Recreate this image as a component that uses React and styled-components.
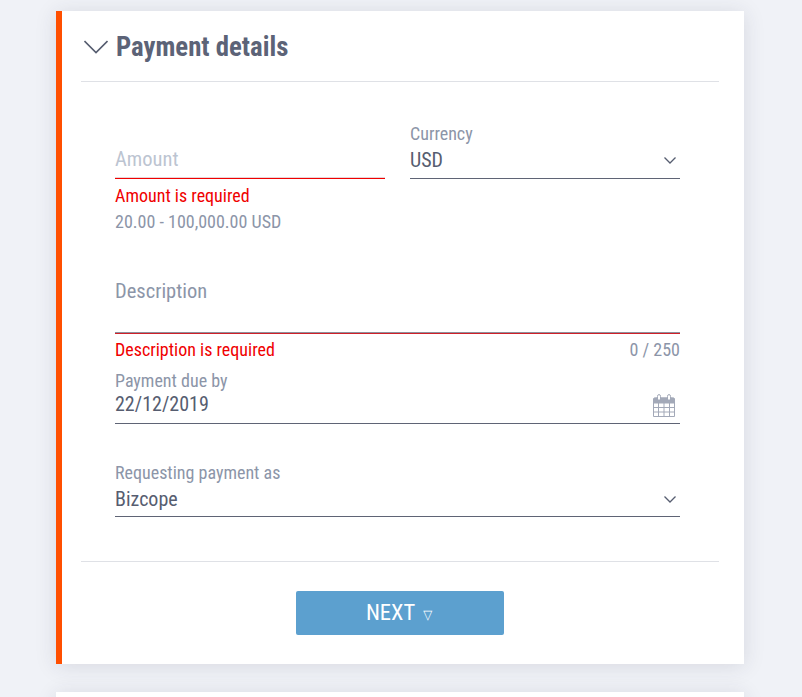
import React from "react";
import styled, { createGlobalStyle } from "styled-components";

const GlobalStyle = createGlobalStyle`
    * {
        box-sizing: border-box;
    }
    html, body {
        margin: 0;
        height: 697px;
        overflow: hidden;
        background-color: #f0f2f7;
        font-family: "Roboto", "Liberation Sans", sans-serif;
        font-stretch: 75%;
    }
`

const Page = styled.div`
    padding-top: 11px;
    display: flex;
    flex-direction: column;
    gap: 28px;
`

const Card = styled.section`
    width: 688px;
    margin-left: 56px;
    background-color: #fff;
    border-left: ${(p) => (p.$active ? "6px solid #ff4f00" : "6px solid #fff")};
    box-shadow: 0 2px 20px rgba(50, 50, 70, 0.13);
    padding: 0 25px 29px 19px;
`

const Header = styled.header`
    height: 71px;
    padding: 2px 0 0 3px;
    display: flex;
    align-items: center;
    gap: 8px;
    border-bottom: 1px solid #dfe1e6;
`

const Title = styled.h2`
    margin: 0;
    font-size: 26.8px;
    font-weight: 700;
    color: #5c6377;
`

const Form = styled.div`
    padding: 41px 39px 44px 34px;
    border-bottom: 1px solid #dfe1e6;
    display: flex;
    flex-direction: column;
`

const Row = styled.div`
    display: grid;
    grid-template-columns: 270px 270px;
    gap: 25px;
    margin-bottom: 44px;
`

const Field = styled.div`
    display: flex;
    flex-direction: column;
    margin-bottom: ${(p) => p.$gap || 0}px;
`

const Label = styled.label`
    font-size: 18px;
    line-height: 22px;
    color: #8c95a8;
`

const lineColors = {
    plain: "#5f6475",
    error: "#f00000",
    touched: "#d02028",
}

const lineShadows = {
    plain: "none",
    error: "inset 0 -1px 0 #e8d4d6",
    touched: "inset 0 -1px 0 #8f909c",
}

const Control = styled.div`
    height: ${(p) => p.$height || 34}px;
    padding-bottom: ${(p) => p.$pad ?? 3}px;
    display: flex;
    align-items: ${(p) => p.$align || "center"};
    justify-content: space-between;
    border-bottom: 1px solid ${(p) => lineColors[p.$line || "plain"]};
    box-shadow: ${(p) => lineShadows[p.$line || "plain"]};
    font-size: 20px;
    color: #565d70;
`

const Placeholder = styled.span`
    font-size: 20.5px;
    margin-bottom: 2px;
    color: ${(p) => p.$color || "#bcc4d1"};
`

const Message = styled.div`
    font-size: 18px;
    line-height: 26px;
    margin-top: ${(p) => p.$top || 0}px;
    color: ${(p) => p.$color || "#8c95a8"};
`

const MessageRow = styled.div`
    display: flex;
    justify-content: space-between;
    height: 33px;
    margin-top: 3px;
`

const Chevron = styled.svg`
    width: ${(p) => p.$size}px;
    margin-right: ${(p) => p.$inset || 0}px;
    flex: none;
    fill: none;
    stroke: #565d70;
    stroke-width: ${(p) => p.$weight || 1.4};
`

const Calendar = styled.svg`
    width: 22px;
    height: 23px;
    margin: 2px 5px 0 0;
    flex: none;
    fill: none;
    stroke: #a3a9b8;
    stroke-width: 1;
`

const Footer = styled.div`
    padding-top: 29px;
    display: flex;
    justify-content: center;
`

const NextButton = styled.button`
    width: 208px;
    height: 44px;
    padding: 0 2px 2px 0;
    border: 0;
    border-radius: 2px;
    background-color: #5ca0cf;
    color: #fff;
    font-family: inherit;
    font-stretch: inherit;
    font-size: 22.5px;
    display: flex;
    align-items: center;
    justify-content: center;
    gap: 8px;
`

const Triangle = styled.span`
    font-size: 13px;
    margin-top: 4px;
    font-family: "DejaVu Sans", sans-serif;
`

const SelectArrow = () => (
    <Chevron $size={12} $inset={4} viewBox="0 0 12 7" $weight={1.3}>
        <path d="M0.5 0.5 L6 6 L11.5 0.5" />
    </Chevron>
)

const CalendarIcon = () => (
    <Calendar viewBox="0 0 22 23">
        <path d="M0.5 5 Q0.5 4 2.5 4 H19.5 Q21.5 4 21.5 5 V22.5 H0.5 Z" />
        <path d="M0.5 5 Q0.5 4 2.5 4 H19.5 Q21.5 4 21.5 5 V9 H0.5 Z" fill="#a3a9b8" />
        <path d="M0.5 13.5 H21.5 M0.5 18 H21.5 M5.5 9 V22.5 M11 9 V22.5 M16.5 9 V22.5" />
        <path d="M4.5 6 V2.5 Q4.5 0.5 6 0.5 Q7.5 0.5 7.5 2.5 V6 Z" fill="#fff" />
        <path d="M14.5 6 V2.5 Q14.5 0.5 16 0.5 Q17.5 0.5 17.5 2.5 V6 Z" fill="#fff" />
    </Calendar>
)

const App = () => {
    return (
        <Page>
            <GlobalStyle />
            <Card $active>
                <Header>
                    <Chevron $size={24} viewBox="0 0 24 14" $weight={1.6}>
                        <path d="M0.5 1 L12 12.5 L23.5 1" />
                    </Chevron>
                    <Title>Payment details</Title>
                </Header>
                <Form>
                    <Row>
                        <Field>
                            <Label>&nbsp;</Label>
                            <Control $line="error">
                                <Placeholder>Amount</Placeholder>
                            </Control>
                            <Message $color="#f00000" $top={4}>Amount is required</Message>
                            <Message>20.00 - 100,000.00 USD</Message>
                        </Field>
                        <Field>
                            <Label>Currency</Label>
                            <Control>
                                USD
                                <SelectArrow />
                            </Control>
                        </Field>
                    </Row>
                    <Field>
                        <Control $height={55} $align="flex-start" $line="touched">
                            <Placeholder $color="#8c95a8">Description</Placeholder>
                        </Control>
                        <MessageRow>
                            <Message $color="#f00000">Description is required</Message>
                            <Message>0 / 250</Message>
                        </MessageRow>
                    </Field>
                    <Field $gap={38}>
                        <Label>Payment due by</Label>
                        <Control $height={32} $pad={7}>
                            22/12/2019
                            <CalendarIcon />
                        </Control>
                    </Field>
                    <Field>
                        <Label>Requesting payment as</Label>
                        <Control $height={33} $pad={2}>
                            Bizcope
                            <SelectArrow />
                        </Control>
                    </Field>
                </Form>
                <Footer>
                    <NextButton>
                        NEXT <Triangle>▽</Triangle>
                    </NextButton>
                </Footer>
            </Card>
            <Card />
        </Page>
    );
};

export default App;
